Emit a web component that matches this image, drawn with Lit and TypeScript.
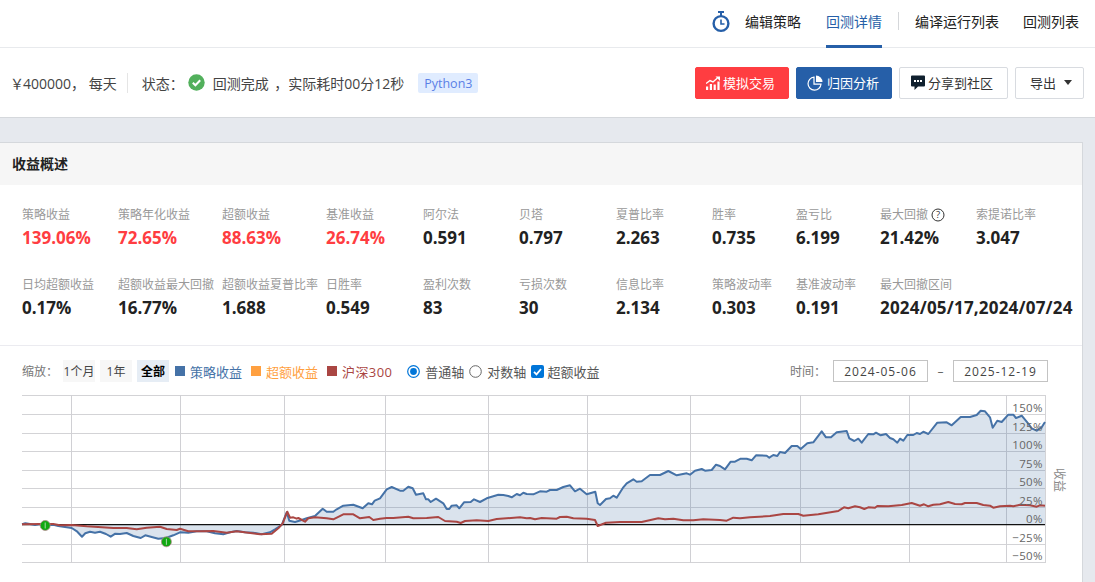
import { LitElement, html, css, svg } from "lit";
import { customElement } from "lit/decorators.js";

const toPts = (off: number, arr: number[]) => {
  const out: [number, number][] = [];
  for (let i = 0; i < arr.length; i += 2) out.push([off + arr[i] / 3, 390 + arr[i + 1] / 3]);
  return out;
};
const blue = [
  ...toPts(0, [66,403,76,400,90,402,105,405,120,402,135,405,160,404,175,408,200,412,215,414,232,425,246,440,256,430,270,425,285,428,300,425,318,432,332,440,346,431,360,432,380,429,400,438,422,444,436,436,455,441,475,446,498,444,520,436,540,427,565,428,590,424,620,424,645,430,670,433,690,427,710,423,735,427,760,428,785,433,810,427,825,418,845,405,860,367,868,392,885,396,905,390,920,385,945,378,968,356,980,365,1000,365,1010,358,1030,347,1060,344]),
  ...toPts(360, [0,352,8,355,25,340,36,343,44,332,60,325,80,298,95,291,120,302,130,302,145,290,158,295,168,314,190,310,198,328,205,328,212,336,228,326,250,340,260,357,268,357,275,347,290,346,298,355,312,337,332,336,342,328,360,336,380,325,415,314,430,315,445,318,455,322,470,312,480,316,490,308,500,312,520,313,540,304,560,305,570,300,590,300,610,291,630,286,645,304,660,296,680,313,706,305,713,340,720,345,738,327,750,325,760,317,770,323,790,292,800,280,820,268,830,275,845,274,870,255,900,255,925,243,950,256,980,250,990,254,1005,242,1025,237,1035,242,1055,240,1068,224]),
  ...toPts(720, [0,228,15,238,32,215,45,215,62,206,80,206,95,211,108,196,140,197,148,203,160,195,172,198,180,186,195,189,215,168,232,168,242,177,262,160,280,157,305,124,318,142,333,142,350,127,380,123,388,145,403,153,415,146,425,158,445,132,460,133,468,128,482,136,498,132,510,144,520,148,532,158,540,146,550,152,562,135,580,135,590,129,600,132,610,125,625,132,652,98,680,97,695,106,722,81,750,81,770,75,782,62,795,64,810,82,818,113,832,92,845,96,865,74,880,74,888,84,905,77,925,101,935,115,950,122,965,112,975,96]),
];
const red = [
  ...toPts(0, [66,403,120,402,160,402,180,406,215,405,260,409,340,414,380,414,410,418,440,413,480,410,500,417,530,420,540,416,565,424,600,424,640,423,680,428,710,424,745,428,780,433,815,431,835,415,848,400,862,365,870,383,880,382,890,386,895,384,915,395,925,385,945,382,980,385,1000,388,1030,373,1060,373]),
  ...toPts(360, [0,385,28,381,40,390,60,386,80,384,100,384,145,380,160,385,200,384,235,381,255,393,290,395,302,399,315,393,350,391,385,393,410,387,440,385,480,382,500,385,510,384,525,388,545,384,590,386,600,381,620,380,640,385,680,386,705,390,713,408,738,398,780,396,845,396,895,385,915,388,940,386,970,391,1000,391,1030,388]),
  ...toPts(720, [0,390,20,392,40,383,60,385,90,382,150,378,190,372,235,372,250,377,295,373,355,363,372,352,385,355,405,349,420,352,433,357,445,352,465,353,472,348,505,349,545,345,575,339,600,347,612,343,625,349,640,344,660,343,685,336,705,342,725,343,735,339,770,339,790,345,810,347,820,353,840,349,870,347,880,349,900,344,930,346,950,350,960,346,975,347]),
];
const pstr = (a: [number, number][]) => a.map((p) => `${p[0].toFixed(1)},${p[1].toFixed(1)}`).join(" ");
const ZERO = 524.7;
const area = `22,${ZERO} ${pstr(blue)} 1045,${ZERO}`;

const HL = [395.5, 414.5, 433.5, 451.5, 470.5, 488.5, 507.5, 544.5, 562.5];
const VL = [71.5, 180.5, 284.5, 385.5, 488.5, 587.5, 690.5, 800.5, 909.5, 1006.5];
const YL: [string, number][] = [["150%",412],["125%",431],["100%",449],["75%",468],["50%",486],["25%",505],["0%",523],["−25%",542],["−50%",560]];

const METRICS: [string, string, boolean?][] = [
  ["策略收益","139.06%",true],["策略年化收益","72.65%",true],["超额收益","88.63%",true],["基准收益","26.74%",true],["阿尔法","0.591"],["贝塔","0.797"],["夏普比率","2.263"],["胜率","0.735"],["盈亏比","6.199"],["最大回撤","21.42%"],["索提诺比率","3.047"],
  ["日均超额收益","0.17%"],["超额收益最大回撤","16.77%"],["超额收益夏普比率","1.688"],["日胜率","0.549"],["盈利次数","83"],["亏损次数","30"],["信息比率","2.134"],["策略波动率","0.303"],["基准波动率","0.191"],["最大回撤区间","2024/05/17,2024/07/24"],
];

@customElement("app-root")
export class AppRoot extends LitElement {
  static styles = css`
    :host { display: block; width: 1095px; height: 582px; overflow: hidden; background: #e6e9ee;
      font-family: "Open Sans", "Noto Sans CJK SC", sans-serif; color: #333; }
    .nav { height: 47px; background: #fff; border-bottom: 1px solid #e8eaed; display: flex; justify-content: flex-end; align-items: center; padding-right: 16px; font-size: 14px; color: #222; box-sizing: content-box; }
    .nav .clock { width: 20px; height: 24px; margin-right: 14px; margin-top: -4px; }
    .tab { height: 47px; display: flex; align-items: center; box-sizing: border-box; padding-bottom: 5px; position: relative; }
    .tab.on { color: #265fa8; border-bottom: 3px solid #265fa8; margin-bottom: -1px; height: 48px; padding-bottom: 4px; }
    .t1 { margin-right: 25px; }
    .t2 { margin-right: 16px; }
    .vsep { width: 1px; height: 18px; background: #d5d7da; margin-right: 16px; margin-top: -5px; }
    .t3 { margin-right: 24px; }

    .sub { height: 69px; background: #fff; border-bottom: 1px solid #d5d8dc; display: flex; align-items: center; padding: 0 11px 0 10px; font-size: 14px; color: #444; white-space: pre; }
    .yen { letter-spacing: -1px; }
    .wide { word-spacing: 2px; }
    .sep { width: 1px; height: 20px; background: #e5e5e5; margin: 0 14px 0 10px; }
    .ok { width: 17px; height: 17px; margin: 0 8px 0 4px; }
    .tag { background: #e0ecff; color: #5a7fe6; height: 20px; width: 60px; display: flex; align-items: center; justify-content: center; margin-left: 14px; border-radius: 2px; font-size: 12.5px; padding-top: 1px; box-sizing: border-box; }
    .spacer { flex: 1; }
    .btn { height: 32px; box-sizing: border-box; border-radius: 2px; display: flex; align-items: center; justify-content: flex-start; font-size: 13px; margin-left: 7px; border: 1px solid #d8dbe0; background: #fff; color: #333; }
    .btn svg { flex: none; }
    .red { background: #ff3d41; border-color: #ff3d41; color: #fff; width: 94px; padding-left: 10px; gap: 3px; }
    .blue { background: #265fa8; border-color: #265fa8; color: #fff; width: 96px; padding-left: 10px; gap: 4px; }
    .share { width: 109px; padding-left: 11px; gap: 3px; }
    .exp { width: 69px; gap: 8px; padding-left: 14px; }
    .caret { width: 0; height: 0; border-left: 4.5px solid transparent; border-right: 4.5px solid transparent; border-top: 5px solid #333; }

    .card { margin-top: 24px; width: 1083px; height: 440px; background: #fff; border-top: 1px solid #d5d8dc; border-right: 1px solid #d5d8dc; box-sizing: border-box; }
    .head { height: 42px; background: #f6f6f6; padding: 0 0 2px 12px; box-sizing: border-box; display: flex; align-items: center; font-size: 14px; font-weight: 700; color: #222; }
    .metrics { height: 161px; border-bottom: 1px solid #ebebf0; padding: 18px 0 0 22px; box-sizing: border-box; display: grid; grid-template-columns: 96px 104px 104px 97px 96px 97px 96px 84px 84px 96px 90px; grid-auto-rows: 70px; }
    .m { min-width: 0; white-space: nowrap; }
    .ml { font-size: 12px; color: #999; height: 23px; line-height: 22px; display: flex; align-items: center; gap: 3px; }
    .mv { font-size: 17px; font-weight: 700; color: #222; line-height: 24px; }
    .mv.up { color: #ff3d41; }
    .mv.long { letter-spacing: 0.2px; }
    .help { width: 14px; height: 14px; }

    .tools { height: 48px; display: flex; align-items: center; padding: 2px 34px 0 22px; font-size: 13px; color: #555; box-sizing: border-box; }
    .z { font-size: 12px; color: #777; width: 41px; }
    .zb { width: 32px; height: 22px; background: #f7f7f7; font-size: 12px; color: #444; display: flex; align-items: center; justify-content: center; margin-right: 5px; }
    .zb.on { background: #e6edf5; color: #000; font-weight: 700; margin-right: 6px; }
    .sq { width: 10px; height: 10px; margin-right: 5px; }
    .lg { margin-right: 9px; }
    .s1 { background: #4572a7; } .c1 { color: #4572a7; }
    .s2 { background: #ffa040; } .c2 { color: #ffa040; }
    .s3 { background: #aa4643; } .c3 { color: #aa4643; margin-right: 15px; letter-spacing: 0.4px; }
    .radio { width: 13px; height: 13px; margin-right: 5px; flex: none; }
    .chk { margin-right: 3px; }
    .opt { margin-right: 5px; }
    .time { font-size: 12px; color: #777; width: 43px; }
    .date { width: 95px; height: 22px; border: 1px solid #c3c3c3; box-sizing: border-box; display: flex; align-items: center; justify-content: center; font-size: 12px; color: #444; letter-spacing: 1px; }
    .dash { width: 25px; text-align: center; font-size: 12px; color: #666; }

    .chart { display: block; width: 1095px; height: 188px; }
    .axis { font-size: 11.5px; fill: #666; letter-spacing: 0.4px; }
    .ytitle { font-size: 12px; fill: #888; }
  `;

  private chart() {
    return html`<svg class="chart" viewBox="0 394 1095 188" xmlns="http://www.w3.org/2000/svg">
      ${HL.map((y) => svg`<line x1="22" x2="1045" y1=${y} y2=${y} stroke="#d3d3d6"></line>`)}
      ${VL.map((x) => svg`<line x1=${x} x2=${x} y1="395" y2="563" stroke="#d0d0d4"></line>`)}
      <line x1="1045.5" x2="1045.5" y1="395" y2="563" stroke="#d3d3d6"></line>
      <polygon points=${area} fill="#4572a7" fill-opacity="0.2"></polygon>
      <line x1="22" x2="1045" y1=${ZERO} y2=${ZERO} stroke="#111" stroke-width="1.2"></line>
      <polyline points=${pstr(blue)} fill="none" stroke="#4572a7" stroke-width="2" stroke-linejoin="round"></polyline>
      <polyline points=${pstr(red)} fill="none" stroke="#aa4643" stroke-width="2" stroke-linejoin="round"></polyline>
      ${[[45.2, 525.5], [166.4, 541.8]].map(([x, y]) => svg`
        <circle cx=${x} cy=${y} r="5" fill="#11a811" stroke="#b08a8a" stroke-width="0.8"></circle>
        <line x1=${x} x2=${x} y1=${y - 3} y2=${y + 3} stroke="#cfe8cf" stroke-width="0.8"></line>`)}
      ${YL.map(([t, y]) => svg`<text class="axis" x="1043" y=${y} text-anchor="end">${t}</text>`)}
      <text class="ytitle" x="1055" y="468" transform="rotate(90 1055 468)">收益</text>
    </svg>`;
  }

  render() {
    return html`
      <div class="nav">
        <svg class="clock" viewBox="0 0 20 24"><rect x="7" y="1" width="6" height="2" fill="#265fa8"></rect><rect x="9" y="2" width="2" height="4" fill="#265fa8"></rect><circle cx="10" cy="13.5" r="7.4" fill="none" stroke="#265fa8" stroke-width="2.4"></circle><path d="M10 9.5V14H13.5" fill="none" stroke="#265fa8" stroke-width="1.6"></path></svg>
        <div class="tab t1">编辑策略</div>
        <div class="tab on t2">回测详情</div>
        <div class="vsep"></div>
        <div class="tab t3">编译运行列表</div>
        <div class="tab">回测列表</div>
      </div>
      <div class="sub">
        <span><span class="yen">￥</span>400000， 每天</span>
        <div class="sep"></div>
        <span>状态：</span>
        <svg class="ok" viewBox="0 0 17 17"><circle cx="8.5" cy="8.5" r="8.2" fill="#52b05c"></circle><path d="M4.8 8.7L7.4 11.3L12.2 6.2" fill="none" stroke="#fff" stroke-width="2"></path></svg>
        <span class="wide">回测完成 ，实际耗时00分12秒</span>
        <span class="tag">Python3</span>
        <div class="spacer"></div>
        <div class="btn red"><svg width="14" height="14" viewBox="0 0 14 14" fill="#fff"><path d="M0 7.5L4 4.5L7 6L11.5 2" fill="none" stroke="#fff" stroke-width="1.4"></path><path d="M9.5 0.5H14V5Z"></path><rect x="0" y="10.5" width="2.2" height="3.5"></rect><rect x="3.8" y="8" width="2.2" height="6"></rect><rect x="7.6" y="8.5" width="2.2" height="5.5"></rect><rect x="11.4" y="5.5" width="2.2" height="8.5"></rect></svg><span>模拟交易</span></div>
        <div class="btn blue"><svg width="16" height="16" viewBox="0 0 16 16"><path d="M7 2.2A6.5 6.5 0 1 0 14 9.2H7Z" fill="none" stroke="#fff" stroke-width="1.2"></path><path d="M9 0.5A6.5 6.5 0 0 1 15.5 7H9Z" fill="#fff"></path></svg><span>归因分析</span></div>
        <div class="btn share"><svg width="14" height="15" viewBox="0 0 14 15"><path d="M0 1.5A1 1 0 0 1 1 .5H13A1 1 0 0 1 14 1.5V10.5A1 1 0 0 1 13 11.5H7L3.5 15V11.5H1A1 1 0 0 1 0 10.5Z" fill="#10202e"></path><rect x="3" y="5" width="2" height="2" fill="#fff"></rect><rect x="6" y="5" width="2" height="2" fill="#fff"></rect><rect x="9" y="5" width="2" height="2" fill="#fff"></rect></svg><span>分享到社区</span></div>
        <div class="btn exp"><span>导出</span><span class="caret"></span></div>
      </div>
      <div class="card">
        <div class="head">收益概述</div>
        <div class="metrics">
          ${METRICS.map(([l, v, up]) => html`<div class="m">
            <div class="ml">${l}${l === "最大回撤" ? html`<svg class="help" viewBox="0 0 14 14"><circle cx="7" cy="7" r="6" fill="none" stroke="#333" stroke-width="1"></circle><text x="7" y="10.4" text-anchor="middle" font-size="9.5" fill="#333">?</text></svg>` : ""}</div>
            <div class="mv ${up ? "up" : ""} ${v.length > 10 ? "long" : ""}">${v}</div></div>`)}
        </div>
        <div class="tools">
          <span class="z">缩放：</span>
          <span class="zb">1个月</span><span class="zb">1年</span><span class="zb on">全部</span>
          <span class="sq s1"></span><span class="lg c1">策略收益</span>
          <span class="sq s2"></span><span class="lg c2">超额收益</span>
          <span class="sq s3"></span><span class="lg c3">沪深300</span>
          <svg class="radio" viewBox="0 0 13 13"><circle cx="6.5" cy="6.5" r="5.8" fill="#fff" stroke="#0075d8" stroke-width="1.2"></circle><circle cx="6.5" cy="6.5" r="3.4" fill="#0075d8"></circle></svg><span class="opt">普通轴</span>
          <svg class="radio" viewBox="0 0 13 13"><circle cx="6.5" cy="6.5" r="5.8" fill="#fff" stroke="#666" stroke-width="1"></circle></svg><span class="opt">对数轴</span>
          <svg class="radio chk" viewBox="0 0 13 13"><rect width="13" height="13" rx="2" fill="#0075d8"></rect><path d="M3 6.8L5.5 9.3L10 4" fill="none" stroke="#fff" stroke-width="1.8"></path></svg><span>超额收益</span>
          <div class="spacer"></div>
          <span class="time">时间：</span>
          <span class="date">2024-05-06</span><span class="dash">–</span><span class="date">2025-12-19</span>
        </div>
        ${this.chart()}
      </div>
    `;
  }
}
